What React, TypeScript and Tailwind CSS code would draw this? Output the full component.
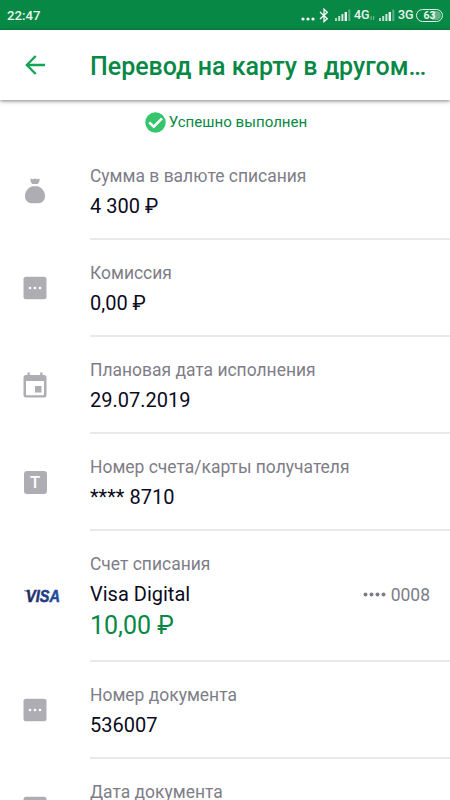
import type { ReactNode } from 'react';

function SignalIcon() {
    return (
        <svg width="16" height="12" viewBox="0 0 16 12" fill="white">
            <rect x="0" y="9" width="2" height="3" opacity="0.65" />
            <rect x="3.2" y="7" width="2" height="5" opacity="0.75" />
            <rect x="6.4" y="5" width="2" height="7" opacity="0.8" />
            <rect x="9.6" y="3" width="2.4" height="9" opacity="0.95" />
            <rect x="13.3" y="0.5" width="2" height="11.5" opacity="0.35" />
        </svg>
    );
}

function StatusBar() {
    return (
        <div className="flex h-[30px] shrink-0 items-center bg-[#088845] pl-[7px] pr-[7px] text-[13px] font-medium text-[#eaf6ef]">
            <span className="pt-px text-[13.2px]">22:47</span>
            <div className="ml-auto flex items-center">
                <svg width="14" height="14" viewBox="0 0 14 14" fill="white" className="mr-[4px]">
                    <circle cx="2" cy="11" r="1.6" />
                    <circle cx="7" cy="11" r="1.6" />
                    <circle cx="12" cy="11" r="1.6" />
                </svg>
                <svg width="10" height="15" viewBox="0 0 10 15" fill="none" stroke="white" strokeWidth="1.3" className="mr-[6px]">
                    <path d="M1 4 L8.3 10.7 L5 13.6 V1.2 L8.3 4.2 L1 10.9" />
                </svg>
                <SignalIcon />
                <span className="ml-[3px] w-[16px] pt-px text-[12.5px]">4G</span>
                <svg width="5" height="6" viewBox="0 0 5 6" fill="none" stroke="#8fc9a9" strokeWidth="0.8" className="mt-[5px] mr-[4px]">
                    <path d="M1.2 1 V4.5 M0.3 3.6 L1.2 4.8 M3.6 5 V1.4 L4.5 2.4" />
                </svg>
                <SignalIcon />
                <span className="ml-[3px] w-[18px] pt-px text-[12.5px]">3G</span>
                <div className="flex h-[13px] w-[27px] items-center rounded-full border border-[#e3f2ea] p-[1px]">
                    <div className="flex h-full w-full items-center justify-center rounded-full bg-linear-to-r from-transparent from-60% to-[#5fb487] to-60% pt-[2px] text-[10.5px] leading-none font-bold">
                        63
                    </div>
                </div>
            </div>
        </div>
    );
}

function Header() {
    return (
        <header className="relative flex h-[70px] shrink-0 items-center bg-white shadow-[0_1px_4px_rgba(0,0,0,0.5)]">
            <div className="w-[90px] pl-[25px]">
                <svg width="21" height="20" viewBox="0 0 21 20" fill="none" stroke="#13a454" strokeWidth="2.3">
                    <path d="M20 10 H2 M10.7 1 L1.8 10 L10.7 19" />
                </svg>
            </div>
            <h1 className="pt-[4px] text-[25px] leading-[30px] font-medium whitespace-nowrap text-[#088845]">Перевод на карту в другом…</h1>
        </header>
    );
}

function MoneyBagIcon() {
    return (
        <svg width="24" height="28" viewBox="0 0 24 28" fill="#aeadb3">
            <path d="M7.3 2.2 C8.5 1.2 9.4 2.3 10.2 2.2 C11.2 2 11.5 1.5 12 1.5 C12.5 1.5 12.8 2 13.8 2.2 C14.6 2.3 15.5 1.2 16.7 2.2 C16.8 4 15.8 5.8 14.7 7 H9.3 C8.2 5.8 7.2 4 7.3 2.2 Z" />
            <path d="M9 9.2 H15 C18.8 10.6 22 14.6 22 18.8 C22 23.5 19 26.2 15.5 26.2 H8.5 C5 26.2 2 23.5 2 18.8 C2 14.6 5.2 10.6 9 9.2 Z" />
        </svg>
    );
}

function DotsIcon() {
    return (
        <svg width="24" height="24" viewBox="0 0 24 24" fill="#aeadb3">
            <rect x="0.5" y="0.7" width="23" height="22.6" rx="2.5" />
            <g fill="white">
                <circle cx="7" cy="12" r="1.3" />
                <circle cx="12" cy="12" r="1.3" />
                <circle cx="17" cy="12" r="1.3" />
            </g>
        </svg>
    );
}

function CalendarIcon() {
    return (
        <svg width="24" height="26" viewBox="0 0 24 26" fill="#aeadb3">
            <path
                fillRule="evenodd"
                d="M4.5 0.5 H6.8 V3 H17.2 V0.5 H19.5 V3 H21 Q23.5 3 23.5 5.5 V23 Q23.5 25.5 21 25.5 H3 Q0.5 25.5 0.5 23 V5.5 Q0.5 3 3 3 H4.5 Z M3 9 V22.3 Q3 23.2 3.9 23.2 H20.1 Q21 23.2 21 22.3 V9 Z"
            />
            <rect x="12" y="14" width="6.5" height="6.5" />
        </svg>
    );
}

function LetterIcon() {
    return (
        <div className="ml-[0.5px] flex h-[23px] w-[23px] items-center justify-center rounded-[3px] bg-[#aeadb3] pt-px text-[16.5px] leading-none font-medium text-white">
            T
        </div>
    );
}

function VisaLogo() {
    return (
        <svg width="40" height="22" viewBox="0 -4 40 22">
            <defs>
                <linearGradient id="visa" x1="0" y1="0" x2="1" y2="0">
                    <stop offset="0" stopColor="#20265f" />
                    <stop offset="1" stopColor="#2350a4" />
                </linearGradient>
            </defs>
            <path d="M1 1.6 H5.5 L6 3.6 C4.5 2.6 2.6 2.1 1 1.9 Z" fill="#20265f" />
            <text
                x="3"
                y="12.7"
                fill="url(#visa)"
                stroke="url(#visa)"
                strokeWidth="0.5"
                fontFamily="Liberation Sans, sans-serif"
                fontSize="15.6"
                fontWeight="700"
                fontStyle="italic"
                textLength="34"
                lengthAdjust="spacingAndGlyphs"
            >
                VISA
            </text>
        </svg>
    );
}

type DetailRowProps = {
    icon: ReactNode;
    label: string;
    value?: string;
    aside?: ReactNode;
    amount?: string;
};

function DetailRow({ icon, label, value, aside, amount }: DetailRowProps) {
    return (
        <div className="flex shrink-0">
            <div className="flex w-[90px] items-center pl-[23px]">{icon}</div>
            <div className="flex-1 border-b-2 border-[#e9e9ea] pt-[21.2px] pb-[16.9px]">
                <div className="text-[17.47px] leading-[24px] text-[#7e7d87]">{label}</div>
                <div className="mt-[3px] flex h-[30px] items-center justify-between pr-[20px] text-[20px] leading-[30px] text-[#0b0a20]">
                    <span>{value}</span>
                    {aside}
                </div>
                {amount && <div className="h-[34px] text-[25px] leading-[34px] text-[#088845]">{amount}</div>}
            </div>
        </div>
    );
}

export default function App() {
    return (
        <div className="flex h-[800px] w-[450px] flex-col overflow-hidden bg-white font-['Roboto','Noto_Sans',sans-serif]">
            <StatusBar />
            <Header />
            <div className="flex h-[42.5px] shrink-0 items-center justify-center gap-[3px] pt-[2px] pl-[2px] text-[15.1px] text-[#088845]">
                <svg width="21" height="21" viewBox="0 0 21 21" fill="none">
                    <circle cx="10.5" cy="10.5" r="10.2" fill="#35c56d" />
                    <path d="M4.2 10.4 L8.7 14.7 L17 6.4" stroke="white" strokeWidth="2.6" />
                </svg>
                <span>Успешно выполнен</span>
            </div>
            <DetailRow icon={<MoneyBagIcon />} label="Сумма в валюте списания" value="4 300 ₽" />
            <DetailRow icon={<DotsIcon />} label="Комиссия" value="0,00 ₽" />
            <DetailRow icon={<CalendarIcon />} label="Плановая дата исполнения" value="29.07.2019" />
            <DetailRow icon={<LetterIcon />} label="Номер счета/карты получателя" value="**** 8710" />
            <DetailRow
                icon={<VisaLogo />}
                label="Счет списания"
                value="Visa Digital"
                amount="10,00 ₽"
                aside={
                    <span className="flex items-center gap-[5px] pt-px text-[17.5px] text-[#7e7d87]">
                        <svg width="23" height="5" viewBox="0 0 23 5" fill="#7e7d87">
                            <circle cx="2.5" cy="2.5" r="2" />
                            <circle cx="8.5" cy="2.5" r="2" />
                            <circle cx="14.5" cy="2.5" r="2" />
                            <circle cx="20.5" cy="2.5" r="2" />
                        </svg>
                        0008
                    </span>
                }
            />
            <DetailRow icon={<DotsIcon />} label="Номер документа" value="536007" />
            <DetailRow icon={<DotsIcon />} label="Дата документа" />
        </div>
    );
}
